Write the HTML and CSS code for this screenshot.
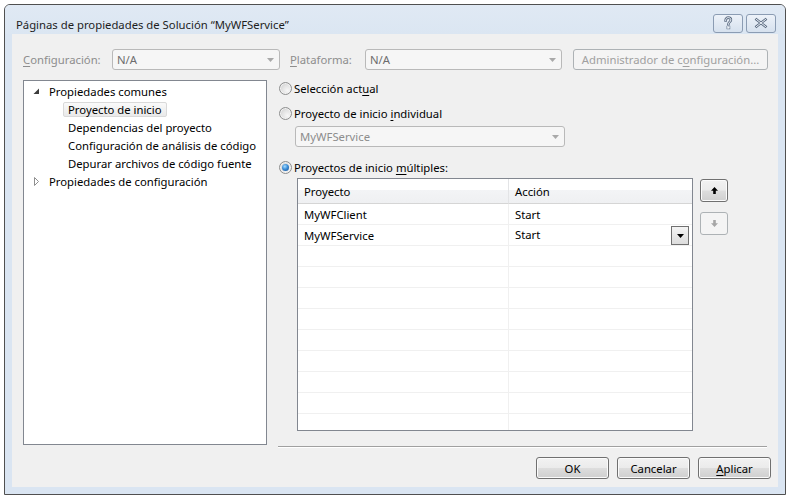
FILE: index.html
```html
<!DOCTYPE html>
<html>
<head>
<meta charset="utf-8">
<link rel="stylesheet" href="styles.css">
</head>
<body>
<div class="window">
  <div class="titlebar">
    <div class="title">Páginas de propiedades de Solución “MyWFService”</div>
    <div class="tbtns">
      <div class="tbtn">
        <svg width="30" height="19" viewBox="0 0 30 19">
          <path class="glyph-o" d="M12.6 6.4 C12.6 4.6 13.8 3.6 15.3 3.6 C16.9 3.6 17.9 4.6 17.9 5.9 C17.9 7.7 15.4 8.1 15.4 10.2"/>
          <rect class="glyph-o" x="14.4" y="12.6" width="2" height="1.8"/>
          <path class="glyph-i" d="M12.6 6.4 C12.6 4.6 13.8 3.6 15.3 3.6 C16.9 3.6 17.9 4.6 17.9 5.9 C17.9 7.7 15.4 8.1 15.4 10.2"/>
          <rect class="glyph-i" x="14.4" y="12.6" width="2" height="1.8"/>
        </svg>
      </div>
      <div class="tbtn">
        <svg width="30" height="19" viewBox="0 0 30 19">
          <path class="glyph-o" d="M10.5 5.5 L19.5 12.5 M19.5 5.5 L10.5 12.5"/>
          <path class="glyph-i" d="M10.5 5.5 L19.5 12.5 M19.5 5.5 L10.5 12.5"/>
        </svg>
      </div>
    </div>
  </div>

  <div class="client">
    <div class="toprow">
      <div class="lbl lbl-config"><u>C</u>onfiguración:</div>
      <div class="combo dis combo-config"><span>N/A</span><svg class="arr" width="7" height="4" viewBox="0 0 7 4"><path d="M0 0 H7 L3.5 4 Z"/></svg></div>
      <div class="lbl lbl-plat"><u>P</u>lataforma:</div>
      <div class="combo dis combo-plat"><span>N/A</span><svg class="arr" width="7" height="4" viewBox="0 0 7 4"><path d="M0 0 H7 L3.5 4 Z"/></svg></div>
      <div class="btn dis btn-admin">Administrador de c<u>o</u>nfiguración...</div>
    </div>

    <div class="main">
      <div class="tree">
        <div class="node l1">
          <span class="tog"><svg width="7" height="7" viewBox="0 0 7 7"><path d="M6 0.5 V6 H0.5 Z" fill="#3c3c3c"/></svg></span>
          <span class="txt">Propiedades comunes</span>
        </div>
        <div class="node l2"><span class="txt sel">Proyecto de inicio</span></div>
        <div class="node l2"><span class="txt">Dependencias del proyecto</span></div>
        <div class="node l2"><span class="txt">Configuración de análisis de código</span></div>
        <div class="node l2"><span class="txt">Depurar archivos de código fuente</span></div>
        <div class="node l1">
          <span class="tog"><svg width="7" height="9" viewBox="0 0 7 9"><path d="M1.5 0.5 L5.5 4.5 L1.5 8.5 Z" fill="#fff" stroke="#8f8f8f"/></svg></span>
          <span class="txt">Propiedades de configuración</span>
        </div>
      </div>

      <div class="pane">
        <div class="radio-row r1"><span class="radio"></span><span class="rtxt">Selección act<u>u</u>al</span></div>
        <div class="radio-row r2"><span class="radio"></span><span class="rtxt">Proyecto de inicio <u>i</u>ndividual</span></div>
        <div class="combo dis combo-single"><span>MyWFService</span><svg class="arr" width="7" height="4" viewBox="0 0 7 4"><path d="M0 0 H7 L3.5 4 Z"/></svg></div>
        <div class="radio-row r3"><span class="radio on"></span><span class="rtxt">Proyectos de inicio <u>m</u>últiples:</span></div>

        <div class="gridrow">
          <div class="grid">
            <div class="hc c1">Proyecto</div><div class="hc c2">Acción</div>
            <div class="cell c1">MyWFClient</div><div class="cell c2">Start</div>
            <div class="cell c1">MyWFService</div><div class="cell c2 has-dd"><span>Start</span><span class="dd"><svg width="7" height="4" viewBox="0 0 7 4"><path d="M0 0 H7 L3.5 4 Z" fill="#000"/></svg></span></div>
            <div class="cell c1"></div><div class="cell c2"></div>
            <div class="cell c1"></div><div class="cell c2"></div>
            <div class="cell c1"></div><div class="cell c2"></div>
            <div class="cell c1"></div><div class="cell c2"></div>
            <div class="cell c1"></div><div class="cell c2"></div>
            <div class="cell c1"></div><div class="cell c2"></div>
            <div class="cell c1"></div><div class="cell c2"></div>
            <div class="cell c1"></div><div class="cell c2"></div>
            <div class="cell c1"></div><div class="cell c2"></div>
          </div>
          <div class="movebtns">
            <div class="btn mv up"><svg width="7" height="7" viewBox="0 0 7 7"><path d="M3.5 0 L7 3.8 H4.8 V7 H2.2 V3.8 H0 Z" fill="#000"/></svg></div>
            <div class="btn dis mv down"><svg width="7" height="7" viewBox="0 0 7 7"><path d="M3.5 7 L7 3.2 H4.8 V0 H2.2 V3.2 H0 Z" fill="#a6a6a6"/></svg></div>
          </div>
        </div>

        <div class="sep"></div>
      </div>
    </div>

    <div class="footer">
      <div class="btn fbtn">OK</div>
      <div class="btn fbtn">Cancelar</div>
      <div class="btn fbtn"><u>A</u>plicar</div>
    </div>
  </div>
</div>
</body>
</html>
```

FILE: styles.css
```css
* { box-sizing: border-box; }
html, body { margin: 0; padding: 0; background: #fff; }
body {
  font-family: "Noto Sans", "Segoe UI", sans-serif;
  font-size: 11.3px;
  color: #000;
}
u { text-decoration: underline; text-underline-offset: 2px; }

.window {
  margin: 4px 0 0 4px;
  width: 782px;
  height: 491px;
  border: 1px solid #505050;
  border-radius: 6px 6px 0 0;
  background: #dae5f2;
  padding: 0 7px 7px 7px;
  display: flex;
  flex-direction: column;
}

.titlebar {
  height: 29px;
  display: flex;
  align-items: flex-start;
  justify-content: space-between;
  background: linear-gradient(#e0e9f4, #dbe6f2);
  margin: 0 -7px;
  padding: 0 9px 0 11px;
  border-radius: 5px 5px 0 0;
}
.title {
  padding-top: 12px;
  line-height: 16px;
  color: #1e1e1e;
}
.tbtns { display: flex; gap: 3px; margin-top: 9px; }
.tbtn {
  width: 30px;
  height: 19px;
  border: 1px solid #8b9cb3;
  border-radius: 3px;
  background: linear-gradient(#edf2f9, #d6e1ee);
  display: flex;
  align-items: center;
  justify-content: center;
}
.tbtn svg { display: block; margin: -1px; }
.glyph-o { fill: none; stroke: #5d6d83; stroke-width: 2.6; stroke-linecap: square; }
.glyph-i { fill: none; stroke: #eef3f9; stroke-width: 1; stroke-linecap: square; }
rect.glyph-o { stroke-width: 1.6; }
rect.glyph-i { stroke-width: 0.5; fill: #eef3f9; }

.client {
  flex: 1;
  background: #f0f0f0;
  padding: 15px 0 0 11px;
  display: flex;
  flex-direction: column;
}

/* top row */
.toprow { display: flex; align-items: center; height: 21px; }
.lbl { color: #8d8d8d; line-height: 21px; }
.lbl-config { width: 89px; }
.lbl-plat { width: 75px; margin-left: 10px; }

.combo {
  height: 21px;
  border: 1px solid #b9b9b9;
  border-radius: 3px;
  background: #f6f6f6;
  display: flex;
  align-items: center;
  justify-content: space-between;
  padding: 0 5px 0 4px;
  color: #6d6d6d;
}
.combo .arr path { fill: #a9a9a9; }
.combo-config { width: 168px; }
.combo-plat { width: 197px; }
.combo-single { width: 270px; margin-left: 17px; margin-top: 4px; color: #8d8d8d; }

.btn {
  border: 1px solid #707070;
  border-radius: 3px;
  background: linear-gradient(#f2f2f2 0%, #ebebeb 48%, #dddddd 52%, #cfcfcf 100%);
  box-shadow: inset 0 0 0 1px #fbfbfb;
  display: flex;
  align-items: center;
  justify-content: center;
  color: #000;
}
.btn.dis {
  border-color: #adb2b5;
  background: #f4f4f4;
  box-shadow: none;
  color: #a0a0a0;
}
.btn-admin { width: 195px; height: 21px; margin-left: 11px; }

/* main */
.main { display: flex; margin-top: 10px; height: 368px; }

.tree {
  width: 244px;
  height: 365px;
  border: 1px solid #828790;
  background: #fff;
  padding-top: 1px;
}
.node { height: 18px; display: flex; align-items: center; }
.node.l1 { padding-left: 9px; }
.node.l2 { padding-left: 39px; }
.tog { width: 11px; display: flex; align-items: center; }
.tog svg { display: block; }
.txt {
  border: 1px solid transparent;
  border-radius: 2px;
  padding: 0 4px;
  height: 15px;
  line-height: 13px;
  white-space: nowrap;
}
.txt.sel {
  border-color: #d9d9d9;
  background: linear-gradient(#fafafa, #e9e9e9);
}

.pane {
  width: 489px;
  margin-left: 11px;
  display: flex;
  flex-direction: column;
}
.radio-row { height: 17px; display: flex; align-items: center; }
.r2 { margin-top: 8px; }
.r3 { margin-top: 12px; }
.radio {
  width: 13px;
  height: 13px;
  margin-left: 1px;
  border-radius: 50%;
  border: 1px solid #8e8f8f;
  background: radial-gradient(circle at 68% 68%, #f7f7f7 0%, #e2e2e2 50%, #c4c4c4 100%);
  box-shadow: inset 0 0 0 1px #f2f2f2;
  position: relative;
  flex: none;
}
.radio.on::after {
  content: "";
  position: absolute;
  left: 2px;
  top: 2px;
  width: 7px;
  height: 7px;
  border-radius: 50%;
  background: radial-gradient(circle at 40% 35%, #a6dcff 0%, #3c8ed8 45%, #124a8c 100%);
}
.rtxt { margin-left: 2px; white-space: nowrap; }

.gridrow { display: flex; margin-top: 2px; }
.grid {
  width: 396px;
  height: 253px;
  margin-left: 19px;
  border: 1px solid #828790;
  background: #fff;
  display: grid;
  grid-template-columns: 211px 1fr;
  grid-template-rows: 25px;
  grid-auto-rows: 21px;
  overflow: hidden;
}
.hc {
  background: linear-gradient(#ffffff 0%, #ffffff 45%, #f3f4f6 46%, #eff0f2 100%);
  border-bottom: 1px solid #d5d5d5;
  padding-left: 6px;
  display: flex;
  align-items: center;
}
.hc.c1 { border-right: 1px solid #e3e4e6; }
.cell {
  border-bottom: 1px solid #f0f0f0;
  padding-left: 6px;
  display: flex;
  align-items: center;
}
.cell.c1 { border-right: 1px solid #f0f0f0; }
.has-dd { justify-content: space-between; padding-right: 3px; align-items: flex-start; padding-top: 0; }
.has-dd span:first-child { line-height: 20px; }
.dd {
  width: 18px;
  height: 19px;
  margin-top: 1px;
  border: 1px solid #707070;
  background: linear-gradient(#f4f4f4, #dcdcdc);
  display: flex;
  align-items: center;
  justify-content: center;
}
.dd svg { display: block; }

.movebtns { margin-left: 7px; display: flex; flex-direction: column; }
.mv { width: 28px; height: 23px; }
.mv svg { display: block; }
.up { margin-top: 1px; }
.down { margin-top: 10px; }

.sep {
  margin-top: auto;
  height: 2px;
  border-top: 1px solid #a0a0a0;
  border-bottom: 1px solid #ffffff;
}

.footer {
  margin-top: 9px;
  display: flex;
  justify-content: flex-end;
  gap: 8px;
  padding-right: 7px;
}
.fbtn { width: 73px; height: 22px; }
```
